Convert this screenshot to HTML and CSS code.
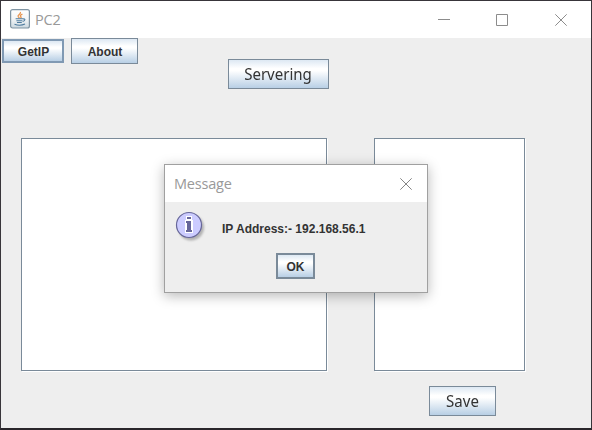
FILE: index.html
```html
<!DOCTYPE html>
<html lang="en">
<head>
<meta charset="utf-8">
<title>PC2</title>
<link rel="stylesheet" href="styles.css">
</head>
<body>
<main class="window">
  <header class="titlebar">
    <svg class="app-icon" width="20" height="20" viewBox="0 0 20 20">
      <defs><linearGradient id="tile" x1="0" y1="0" x2="0" y2="1"><stop offset="0" stop-color="#fff"/><stop offset=".5" stop-color="#f2f5f7"/><stop offset="1" stop-color="#cbd8e0"/></linearGradient></defs>
      <rect x=".6" y=".6" width="18.8" height="18.4" rx="2" fill="url(#tile)" stroke="#7f94a3" stroke-width="1.2"/>
      <path d="M10.4 3c1 2-3.4 2.8-2.2 4.6l1.2 1.6M12.4 5.200c-2 .8-2.600 1.500-1.500 2.600.5.600.200 1-.500 1.500" fill="none" stroke="#e8944f" stroke-width="1.300"/>
      <path d="M5.600 9.800h7.400M6.400 11.800h6M7 13.500h4.800M13 10c2.600-.6 2.500 1.800-.3 2.500M4.500 15.200c2.800 1.200 7.800 1.100 10.500-.1" fill="none" stroke="#4f7c9f" stroke-width="1.100"/>
    </svg>
    <h1 class="title">PC2</h1>
    <svg class="controls" width="130" height="14" viewBox="0 0 130 14" fill="none" stroke="#8c8c8c">
      <path d="M0 6.500h12M58.500 1.500h11v11h-11zM117.300 1.300l11.400 11.400M128.700 1.300l-11.400 11.400"/>
    </svg>
  </header>
  <section class="actions">
    <button class="btn get-ip">GetIP</button>
    <button class="btn about">About</button>
    <button class="btn large servering"><span>Servering</span></button>
  </section>
  <section class="areas">
    <div class="area log"></div>
    <div class="area clients"></div>
  </section>
  <footer class="footer"><button class="btn large save"><span>Save</span></button></footer>
</main>
<div class="dialog" role="dialog">
  <header class="dialog-bar">
    <h2 class="dialog-title">Message</h2>
    <svg width="14" height="14" viewBox="0 0 14 14" fill="none" stroke="#858585"><path d="M1.300 1.300l11.400 11.400M12.700 1.300L1.300 12.700"/></svg>
  </header>
  <div class="dialog-body">
    <div class="message">
      <svg class="info" width="32" height="32" viewBox="0 0 32 32">
        <defs><filter id="soft" x="-30%" y="-30%" width="160%" height="160%"><feGaussianBlur stdDeviation="1.300"/></filter></defs>
        <circle cx="16" cy="16.500" r="13" fill="#999" opacity=".7" filter="url(#soft)"/>
        <circle cx="14" cy="14" r="12.500" fill="#ccccff" stroke="#666699" stroke-width="1.200"/>
        <path d="M11 5h6v4h-6zM10 9h8v13h-8z" fill="#fff"/>
        <path d="M12 6h4v2h-4zM11 10h5v2h-5zM12 12h4v7h-4zM11 19h6v2h-6z" fill="#666699"/>
      </svg>
      <p class="text">IP Address:- 192.168.56.1</p>
    </div>
    <button class="btn ok">OK</button>
  </div>
</div>
</body>
</html>
```
FILE: styles.css
```css
* { box-sizing: border-box; }
body { margin: 0; overflow: hidden; }
h1, h2, p { margin: 0; font-weight: normal; }
.window {
  width: 592px;
  height: 430px;
  display: flex;
  flex-direction: column;
  background: #eee;
  border: 1px solid #38353a;
  border-bottom: 2px solid #29262a;
}
.titlebar {
  flex: none;
  height: 37px;
  padding: 0 23px 0 9px;
  display: flex;
  align-items: center;
  background: #fff;
}
.app-icon { margin: -2px 5px 0 0; }
.title, .dialog-title {
  font: 14.5px/20px "Open Sans", sans-serif;
  letter-spacing: -0.2px;
  color: #999;
}
.controls { margin-left: auto; }
.btn {
  display: flex;
  align-items: center;
  justify-content: center;
  padding: 0;
  border: 1px solid #7a8a99;
  border-radius: 0;
  background: linear-gradient(#dde8f3 0%, #fff 30%, #fff 38%, #b8cfe5 100%);
  color: #333;
  font: bold 12px/16px "Liberation Sans", Arial, sans-serif;
}
.actions {
  display: flex;
  align-items: flex-start;
  height: 51px;
}
.get-ip {
  width: 62px;
  height: 24px;
  margin: 1px 7px 0 1px;
  padding: 2px 0 0 1px;
  border: 2px solid #8099b3;
}
.about { width: 67px; height: 26px; padding: 2px 0 0 1px; }
.large { height: 30px; font: 16px/22px "Noto Sans", sans-serif; }
.large span { transform: scaleX(.94); }
.servering { width: 101px; margin: 21px 0 0 90px; }
.areas {
  display: flex;
  gap: 47px;
  margin-top: 49px;
  padding-left: 20px;
}
.area {
  height: 233px;
  background: #fff;
  border: 1px solid #7a8a99;
  box-shadow: 1px 1px #fff;
}
.log { width: 306px; }
.clients { width: 151px; }
.footer { padding: 15px 0 0 428px; }
.save { width: 67px; }
.dialog {
  position: absolute;
  left: 164px;
  top: 164px;
  width: 264px;
  height: 129px;
  border: 1px solid #a0a0a0;
  background: #eee;
  box-shadow: 0 3px 12px rgba(0, 0, 0, .28);
}
.dialog-bar {
  height: 37px;
  padding: 0 14px 0 9px;
  display: flex;
  align-items: center;
  justify-content: space-between;
  background: #fff;
}
.dialog-body {
  display: flex;
  flex-direction: column;
  padding: 9px 10px 0;
}
.message { display: flex; height: 42px; }
.text {
  margin: 10px 0 0 15px;
  color: #333;
  font: bold 12px/16px "Liberation Sans", Arial, sans-serif;
  white-space: nowrap;
}
.ok { width: 39px; height: 26px; align-self: center; margin-right: 2px; padding: 1px 0 0 1px; border-width: 2px; }
```
